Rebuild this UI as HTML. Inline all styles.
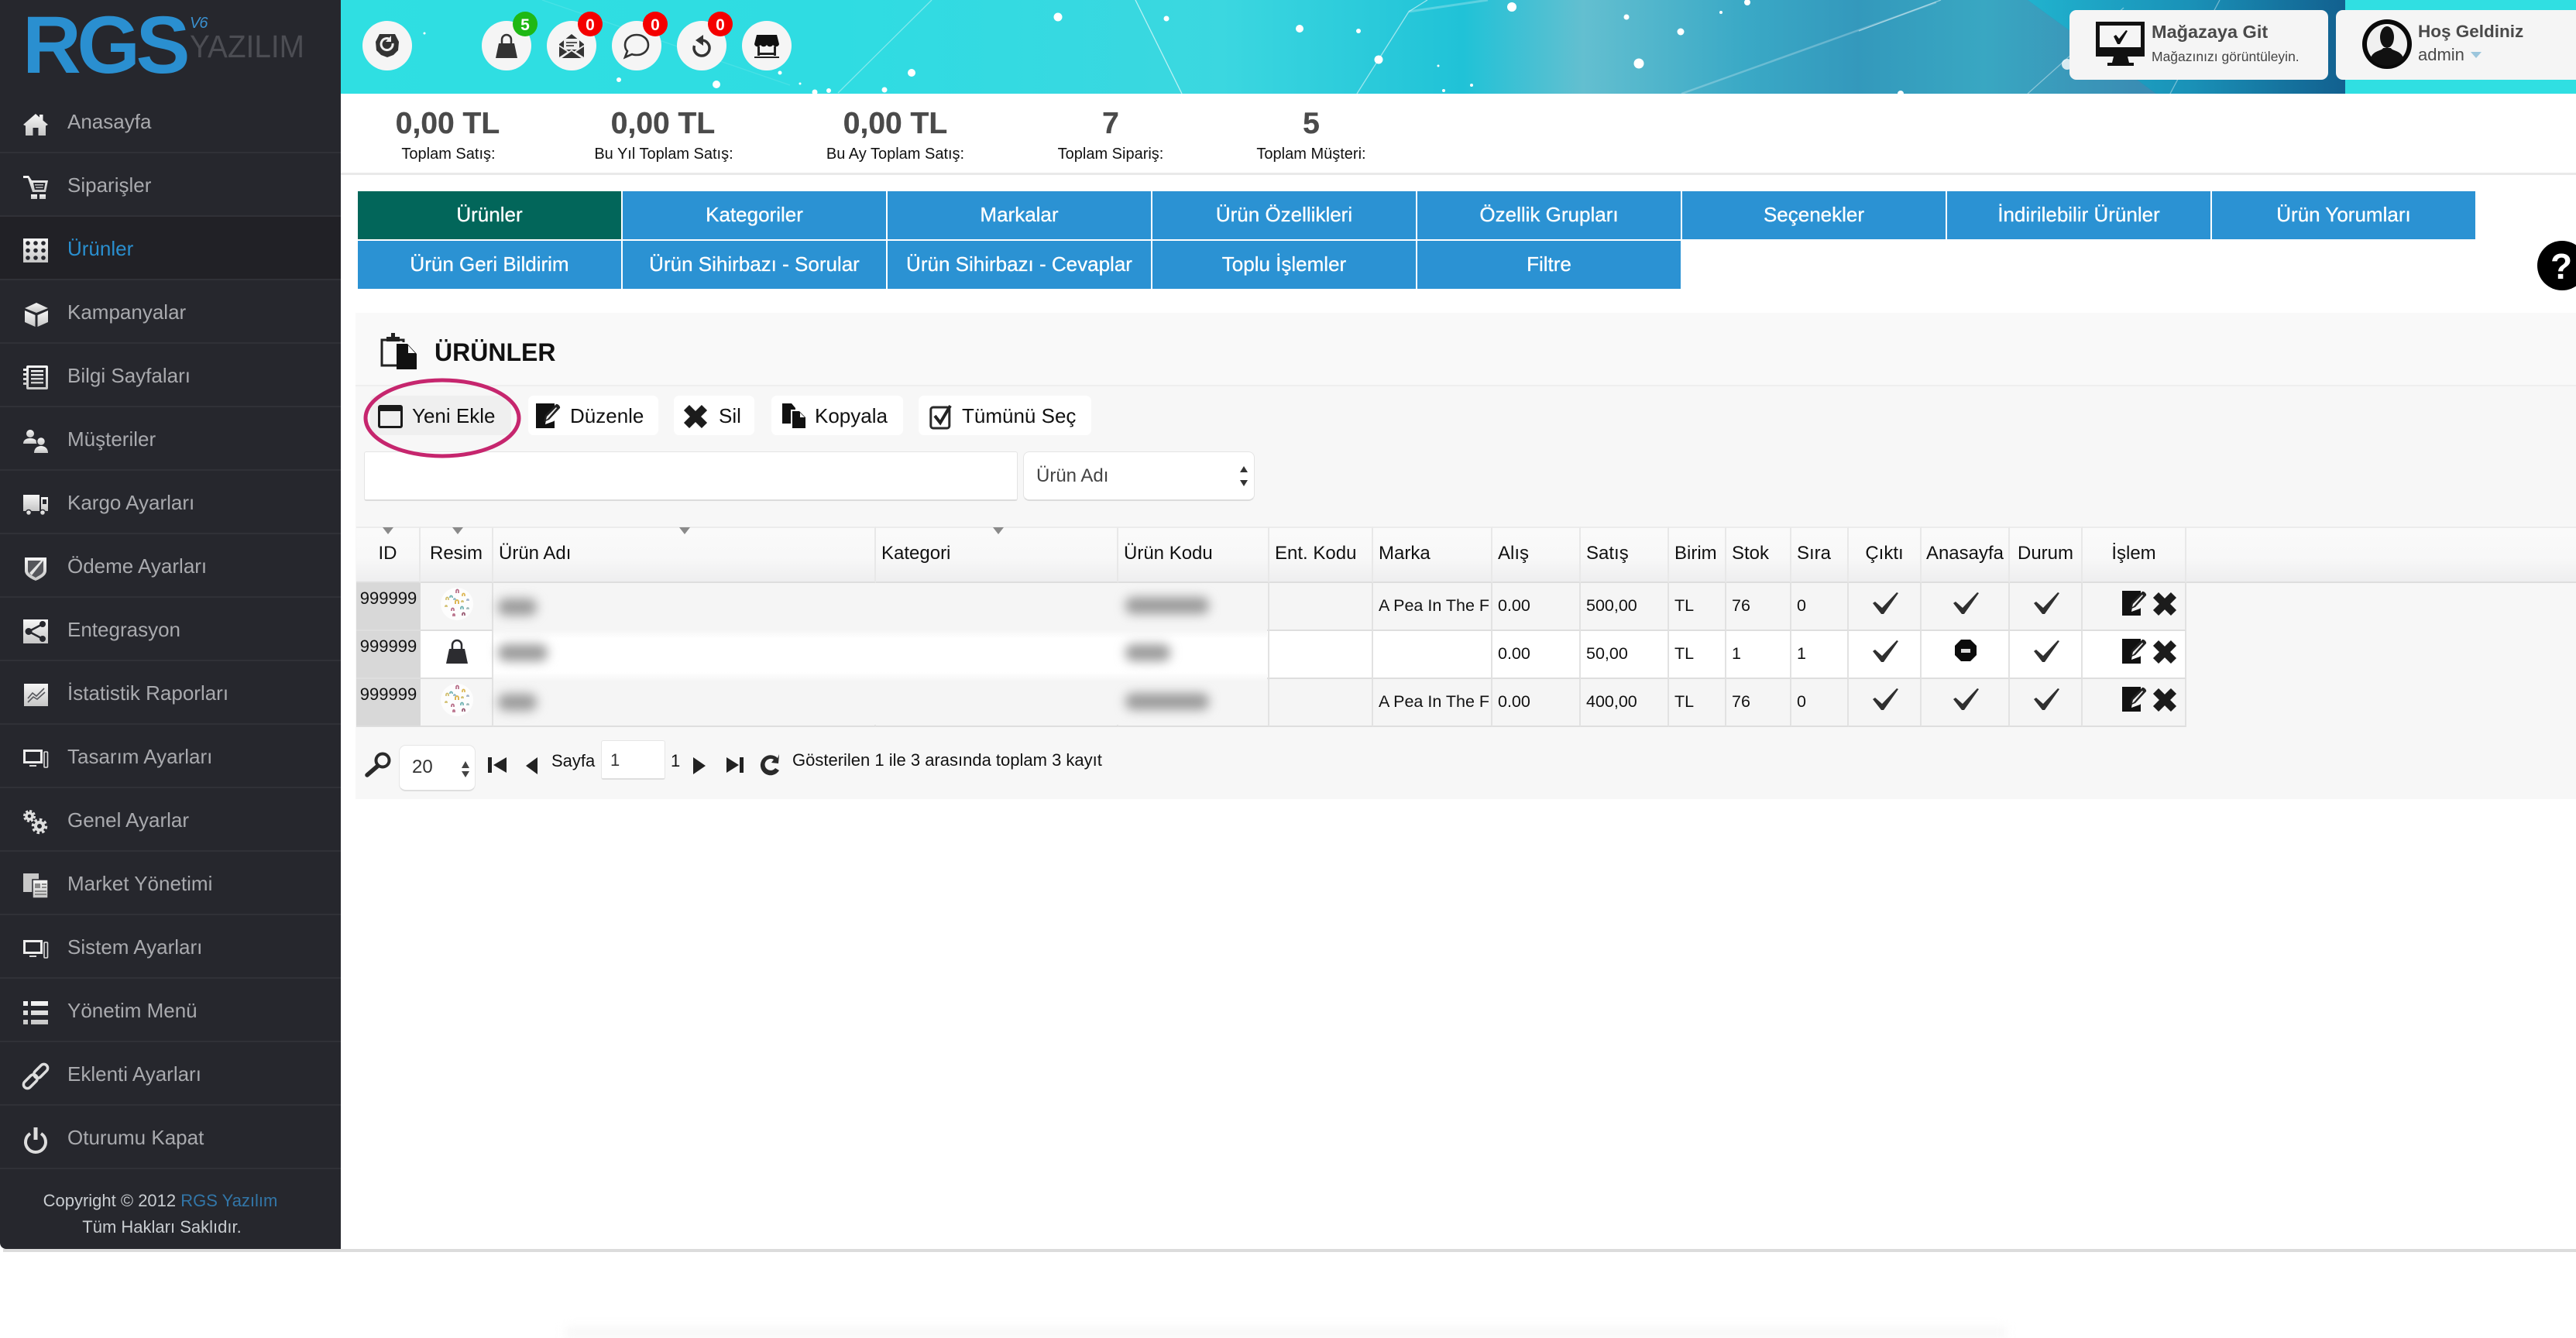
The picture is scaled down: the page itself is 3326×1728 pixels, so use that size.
<!DOCTYPE html>
<html lang="tr"><head><meta charset="utf-8"><title>RGS Yazılım</title>
<style>
html,body{margin:0;padding:0;background:#fff}
body{width:3326px;height:1725px;position:relative;overflow:hidden;font-family:"Liberation Sans",Arial,sans-serif;color:#111}
.a{position:absolute}
.t{position:absolute;white-space:nowrap;line-height:40px}
#side{left:0;top:0;width:440px;height:1613px;background:#26272d;border-bottom-left-radius:8px}
#side ul{list-style:none;margin:0;padding:0;position:absolute;top:116px;left:0;width:440px}
#side li{height:82px;box-sizing:border-box;border-bottom:2px solid #303137;line-height:83px;font-size:26px;color:#a9aaae;padding-left:87px;white-space:nowrap}
#side li.on{background:#212126;color:#2a8fcf}
.s1{width:340px;text-align:center;font-size:39px;font-weight:bold;color:#4a4a4a;-webkit-text-stroke:.3px #4a4a4a}
.s2{width:340px;text-align:center;font-size:20px;color:#111}
.tab{position:absolute;height:62px;width:340px;background:#2b92d3;color:#fff;text-align:center;line-height:60px;font-size:26px;-webkit-text-stroke:.3px #fff;white-space:nowrap}
.btn{position:absolute;top:511px;height:51px;background:#fff;border-radius:7px}
.bt{font-size:26px;top:517px}
table{position:absolute;left:460px;top:680px;border-collapse:separate;border-spacing:0;table-layout:fixed;width:2363px;font-size:21.5px}
th{height:73px;box-sizing:border-box;background:linear-gradient(#fafafa 0,#f8f8f8 55%,#eeeeef 100%);border-right:2px solid #e8e8e8;border-bottom:2px solid #dedede;border-top:2px solid #ececec;font-weight:normal;font-size:24px;text-align:left;vertical-align:top;padding:14px 0 0 7px;line-height:38px;white-space:nowrap;overflow:hidden}
th.c{text-align:center;padding-left:0}
td{height:62px;box-sizing:border-box;background:#f5f5f5;border-right:2px solid #e2e2e2;border-bottom:2px solid #dedede;padding:0 0 3px 7px;white-space:nowrap;overflow:hidden;line-height:38px;vertical-align:middle}
tr.w td{background:#fff}
table tr td.id{background:#d8d8d8;font-size:22px;padding:1px 0 0 0;vertical-align:top;text-align:center;border-right:0;line-height:38px}
.bl{position:absolute;background:#9c9c9c;border-radius:10px;filter:blur(7px);height:22px}
</style></head><body>

<svg class="a" style="left:440px;top:0" width="2886" height="121" viewBox="440 0 2886 121">
<defs>
<linearGradient id="bg" gradientUnits="userSpaceOnUse" x1="440" y1="0" x2="3028" y2="0">
<stop offset="0" stop-color="#2fdfe2"/><stop offset=".25" stop-color="#2fdce2"/><stop offset=".44" stop-color="#3bd7e0"/><stop offset=".56" stop-color="#20c2d7"/><stop offset=".62" stop-color="#63bfd0"/><stop offset=".7" stop-color="#3aa9c6"/><stop offset=".8" stop-color="#2f8cb5"/><stop offset="1" stop-color="#12608f"/>
</linearGradient>
<linearGradient id="bg2" gradientUnits="userSpaceOnUse" x1="2620" y1="0" x2="3028" y2="0">
<stop offset="0" stop-color="#20b2ce"/><stop offset=".5" stop-color="#1a92b8"/><stop offset="1" stop-color="#12608f"/>
</linearGradient>
<linearGradient id="bg3" gradientUnits="userSpaceOnUse" x1="2400" y1="0" x2="2760" y2="0">
<stop offset="0" stop-color="#3399bc"/><stop offset=".45" stop-color="#39a7c2"/><stop offset="1" stop-color="#3a8db4"/>
</linearGradient>
</defs>
<rect x="440" y="0" width="2886" height="121" fill="#30dfe2"/>
<rect x="440" y="0" width="2588" height="121" fill="url(#bg)"/>
<polygon points="2400,0 2618,0 2784,121 2400,121" fill="url(#bg3)"/>
<polygon points="2618,0 3028,0 3028,121 2784,121" fill="url(#bg2)"/>
<g stroke="#fff" fill="none" stroke-opacity=".4" stroke-width="1.300">
<path d="M1203 0 1082 120"/><path d="M1466 0 1526 121" stroke-opacity=".65"/><path d="M1843 0 1819 15 1752 121" stroke-opacity=".55"/>
<path d="M1819 15 1921 0" stroke-width="3" stroke-opacity=".25"/><path d="M2500 3 2171 121" stroke-width="2.500" stroke-opacity=".25"/>
<path d="M2400 40 2506 0" stroke-opacity=".45"/><path d="M2742 10 2618 121"/><path d="M2866 0 2802 121"/>
<path d="M700 0 1020 110" stroke-opacity=".12"/>
</g>
<g fill="#fff">
<circle cx="1366" cy="22" r="5.500"/><circle cx="1506" cy="24" r="3.500"/><circle cx="1678" cy="37" r="5"/><circle cx="1754" cy="40" r="3"/><circle cx="1780" cy="77" r="5.500"/><circle cx="1952" cy="9" r="6"/><circle cx="2100" cy="22" r="3.500"/><circle cx="2170" cy="41" r="4.500"/><circle cx="2116" cy="82" r="6.500"/><circle cx="2256" cy="3" r="4"/><circle cx="2222" cy="16" r="2"/><circle cx="1177" cy="94" r="5"/><circle cx="1142" cy="116" r="3.500"/><circle cx="1857" cy="85" r="1.500"/><circle cx="1900" cy="110" r="2"/><circle cx="1864" cy="117" r="2"/><circle cx="925" cy="109" r="5"/><circle cx="799" cy="103" r="3"/><circle cx="1007" cy="94" r="2.500"/><circle cx="1052" cy="119" r="3.500"/><circle cx="1070" cy="117" r="3"/><circle cx="548" cy="43" r="1.500"/><circle cx="1033" cy="108" r="1.500"/><circle cx="2669" cy="83" r="7" fill-opacity=".8"/><circle cx="2454" cy="121" r="4"/>
</g>
</svg>

<div id="side" class="a">
<ul>
<li>Anasayfa</li><li>Siparişler</li><li class="on">Ürünler</li><li>Kampanyalar</li><li>Bilgi Sayfaları</li><li>Müşteriler</li><li>Kargo Ayarları</li><li>Ödeme Ayarları</li><li>Entegrasyon</li><li>İstatistik Raporları</li><li>Tasarım Ayarları</li><li>Genel Ayarlar</li><li>Market Yönetimi</li><li>Sistem Ayarları</li><li>Yönetim Menü</li><li>Eklenti Ayarları</li><li>Oturumu Kapat</li>
</ul>
<div class="t" style="left:0;width:414px;text-align:center;top:1531px;font-size:22px;color:#c9cdd1">Copyright © 2012 <span style="color:#3276a8">RGS Yazılım</span></div>
<div class="t" style="left:0;width:418px;text-align:center;top:1565px;font-size:22px;color:#c9cdd1">Tüm Hakları Saklıdır.</div>
<div class="t" style="left:29px;top:9px;line-height:100px;font-size:105px;font-weight:bold;color:#2a8fd0;letter-spacing:-5.500px">RGS</div>
<div class="t" style="left:245px;top:20px;line-height:20px;font-size:20px;font-style:italic;color:#3a90cf;letter-spacing:-1px">V6</div>
<svg class="a" style="left:240px;top:40px" width="165" height="40"><text x="5" y="34" font-family="Liberation Sans" font-size="41" fill="#4c4d53" textLength="148" lengthAdjust="spacingAndGlyphs">YAZILIM</text></svg>
</div>

<div class="a" style="left:4px;top:1613px;width:3322px;height:4px;background:#dcdcdc"></div>
<div class="a" style="left:440px;top:223px;width:2886px;height:3px;background:#e9e9e9"></div>
<div class="a" style="left:730px;top:1714px;width:1860px;height:14px;background:#f7f7f7;filter:blur(6px)"></div>

<div class="t s1" style="left:408px;top:140px">0,00 TL</div><div class="t s2" style="left:409px;top:179px">Toplam Satış:</div>
<div class="t s1" style="left:686px;top:140px">0,00 TL</div><div class="t s2" style="left:687px;top:179px">Bu Yıl Toplam Satış:</div>
<div class="t s1" style="left:986px;top:140px">0,00 TL</div><div class="t s2" style="left:986px;top:179px">Bu Ay Toplam Satış:</div>
<div class="t s1" style="left:1264px;top:140px">7</div><div class="t s2" style="left:1264px;top:179px">Toplam Sipariş:</div>
<div class="t s1" style="left:1523px;top:140px">5</div><div class="t s2" style="left:1523px;top:179px">Toplam Müşteri:</div>

<div class="tab" style="left:462px;top:247px;background:#02665a">Ürünler</div>
<div class="tab" style="left:804px;top:247px">Kategoriler</div>
<div class="tab" style="left:1146px;top:247px">Markalar</div>
<div class="tab" style="left:1488px;top:247px">Ürün Özellikleri</div>
<div class="tab" style="left:1830px;top:247px">Özellik Grupları</div>
<div class="tab" style="left:2172px;top:247px">Seçenekler</div>
<div class="tab" style="left:2514px;top:247px">İndirilebilir Ürünler</div>
<div class="tab" style="left:2856px;top:247px">Ürün Yorumları</div>
<div class="tab" style="left:462px;top:311px">Ürün Geri Bildirim</div>
<div class="tab" style="left:804px;top:311px">Ürün Sihirbazı - Sorular</div>
<div class="tab" style="left:1146px;top:311px">Ürün Sihirbazı - Cevaplar</div>
<div class="tab" style="left:1488px;top:311px">Toplu İşlemler</div>
<div class="tab" style="left:1830px;top:311px">Filtre</div>

<div class="a" style="left:459px;top:404px;width:2867px;height:95px;background:#f9f9f9;border-bottom:2px solid #efefef;box-sizing:border-box"></div>
<div class="a" style="left:459px;top:499px;width:2867px;height:533px;background:#f7f7f7"></div>
<div class="t" style="left:561px;top:435px;font-size:32px;font-weight:bold;color:#111">ÜRÜNLER</div>

<div class="btn" style="left:478px;width:182px;background:#efefef"></div>
<div class="btn" style="left:682px;width:168px"></div>
<div class="btn" style="left:870px;width:104px"></div>
<div class="btn" style="left:996px;width:170px"></div>
<div class="btn" style="left:1186px;width:223px"></div>
<div class="t bt" style="left:532px">Yeni Ekle</div>
<div class="t bt" style="left:736px">Düzenle</div>
<div class="t bt" style="left:928px">Sil</div>
<div class="t bt" style="left:1052px">Kopyala</div>
<div class="t bt" style="left:1242px">Tümünü Seç</div>

<div class="a" style="left:470px;top:583px;width:844px;height:64px;background:#fff;border:1px solid #e4e4e4;border-bottom:2px solid #dcdcdc;box-sizing:border-box;border-radius:3px"></div>
<div class="a" style="left:1321px;top:583px;width:299px;height:64px;background:#fff;border:1px solid #e4e4e4;border-bottom:2px solid #dcdcdc;box-sizing:border-box;border-radius:8px"></div>
<div class="t" style="left:1338px;top:595px;font-size:24px;color:#444">Ürün Adı</div>

<div class="a" style="left:2820px;top:680px;width:506px;height:73px;box-sizing:border-box;background:linear-gradient(#fafafa 0,#f8f8f8 55%,#eeeeef 100%);border-bottom:2px solid #dedede;border-top:2px solid #ececec"></div>

<table>
<colgroup><col style="width:83px"><col style="width:94px"><col style="width:494px"><col style="width:313px"><col style="width:195px"><col style="width:134px"><col style="width:154px"><col style="width:114px"><col style="width:114px"><col style="width:74px"><col style="width:84px"><col style="width:74px"><col style="width:94px"><col style="width:114px"><col style="width:94px"><col style="width:134px"></colgroup>
<tr><th class="c">ID</th><th class="c">Resim</th><th>Ürün Adı</th><th>Kategori</th><th>Ürün Kodu</th><th>Ent. Kodu</th><th>Marka</th><th>Alış</th><th>Satış</th><th>Birim</th><th>Stok</th><th>Sıra</th><th class="c">Çıktı</th><th class="c">Anasayfa</th><th class="c">Durum</th><th class="c">İşlem</th></tr>
<tr><td class="id">999999</td><td></td><td></td><td></td><td></td><td></td><td>A Pea In The F</td><td>0.00</td><td>500,00</td><td>TL</td><td>76</td><td>0</td><td></td><td></td><td></td><td></td></tr>
<tr class="w"><td class="id">999999</td><td></td><td></td><td></td><td></td><td></td><td></td><td>0.00</td><td>50,00</td><td>TL</td><td>1</td><td>1</td><td></td><td></td><td></td><td></td></tr>
<tr><td class="id">999999</td><td></td><td></td><td></td><td></td><td></td><td>A Pea In The F</td><td>0.00</td><td>400,00</td><td>TL</td><td>76</td><td>0</td><td></td><td></td><td></td><td></td></tr>
</table>

<div class="a" style="left:637px;top:753px;width:999px;height:183px;background:linear-gradient(#f5f5f5 0,#f5f5f5 60px,#fff 72px,#fff 115px,#f5f5f5 127px,#f5f5f5 100%)"></div>
<div class="bl" style="left:643px;top:773px;width:50px"></div>
<div class="bl" style="left:643px;top:832px;width:64px"></div>
<div class="bl" style="left:643px;top:896px;width:50px"></div>
<div class="bl" style="left:1453px;top:771px;width:108px"></div>
<div class="bl" style="left:1453px;top:832px;width:58px"></div>
<div class="bl" style="left:1453px;top:895px;width:108px"></div>

<div class="a" style="left:515px;top:962px;width:99px;height:60px;background:#fff;border:1px solid #e6e6e6;border-bottom:2px solid #dedede;box-sizing:border-box;border-radius:9px"></div>
<div class="a" style="left:776px;top:956px;width:83px;height:51px;background:#fff;border:1px solid #e6e6e6;border-bottom:2px solid #dedede;box-sizing:border-box;border-radius:3px"></div>
<div class="t" style="left:532px;top:971px;font-size:24px;color:#333">20</div>
<div class="t" style="left:712px;top:963px;font-size:22px">Sayfa</div>
<div class="t" style="left:788px;top:962px;font-size:22px;color:#333">1</div>
<div class="t" style="left:866px;top:963px;font-size:22px">1</div>
<div class="t" style="left:1023px;top:962px;font-size:22px">Gösterilen 1 ile 3 arasında toplam 3 kayıt</div>

<!-- top right cards -->
<div class="a" style="left:2672px;top:13px;width:334px;height:90px;background:#f5f5f5;border-radius:9px"></div>
<div class="a" style="left:3016px;top:13px;width:330px;height:90px;background:#f5f5f5;border-radius:9px"></div>
<div class="t" style="left:2778px;top:21px;font-size:23.500px;font-weight:bold;color:#4a4a4a">Mağazaya Git</div>
<div class="t" style="left:2778px;top:53px;font-size:17.500px;color:#444">Mağazınızı görüntüleyin.</div>
<div class="t" style="left:3122px;top:21px;font-size:22.500px;font-weight:bold;color:#4a4a4a">Hoş Geldiniz</div>
<div class="t" style="left:3122px;top:51px;font-size:22px;color:#4a4a4a">admin</div>

<svg class="a" style="left:0;top:0" width="3326" height="1725" viewBox="0 0 3326 1725">
<defs>
<linearGradient id="ig" x1="0" y1="0" x2="0" y2="1"><stop offset="0" stop-color="#f6f6f6"/><stop offset="1" stop-color="#c6c6c6"/></linearGradient>
<g id="mon"><rect x="1.500" y="5.500" width="22" height="15" fill="none" stroke="#ececec" stroke-width="3"/><rect x="8" y="24" width="9" height="2" fill="#d8d8d8"/><rect x="27" y="7" width="4.500" height="20" rx="1" fill="none" stroke="#ddd" stroke-width="1.600"/></g>
<g id="bag"><path d="M6 13h20l4 19H2z"/><path d="M10 15V8a6 6 0 0 1 12 0v7" fill="none" stroke="currentColor" stroke-width="2.500"/></g>
<path id="chk" d="M0 14 3 12 12 20 31 0 33 1 14 28 11 28z"/>
<g id="edit"><path d="M0 0h24v6L14 16l-2 11 11-4 1-1v10H0z" fill="#111"/><path d="M10 24l2-9L26 1c2-1 6 3 5 5L17 21z" fill="#222"/><path d="M13 21l1-4L26 5l1 1L15 20z" fill="#eee"/></g>
<path id="xx" d="M3.500 3.500 26.500 26.500M26.500 3.500 3.500 26.500" stroke="#1c1c1c" stroke-width="10" fill="none"/>
<g id="dots" opacity=".8"><circle cx="0" cy="0" r="21" fill="#fff"/><g fill="none" stroke-width="1.700">
<path d="M-2 0v-3a2 2 0 0 1 4 0v3" stroke="#d8a82e" stroke-width="2"/><path d="M-14 -5v-2a1.500 1.500 0 0 1 3 0v2" stroke="#c9b24e"/><path d="M-1 -14v-3a1.500 1.500 0 0 1 3 0v3" stroke="#a84a6c"/><path d="M7 -10v-2a1.500 1.500 0 0 1 3 0v2" stroke="#d8a82e"/><path d="M-9 -8v-1a1.500 1.500 0 0 1 3 0v1" stroke="#4aa0a0"/><path d="M13 -4v-1a1 1 0 0 1 2 0v1" stroke="#8aa0c0"/><path d="M-7 9v-2a1.500 1.500 0 0 1 3 0v2" stroke="#a84a6c"/><path d="M5 7v-2a1.500 1.500 0 0 1 3 0v2" stroke="#4aa0a0"/><path d="M-5 16v-2a1 1 0 0 1 2 0v2" stroke="#a84a6c"/><path d="M7 15v-2a1.500 1.500 0 0 1 3 0v2" stroke="#803050"/><path d="M-15 4v-1a1 1 0 0 1 2 0v1" stroke="#c9b24e"/><path d="M13 7v-1a1 1 0 0 1 2 0v1" stroke="#8aa"/><path d="M-4 -5v-1a1 1 0 0 1 2 0v1" stroke="#7ab"/><path d="M6 -2v-1a1 1 0 0 1 2 0v1" stroke="#c9b24e"/></g></g>
</defs>

<!-- sidebar icons -->
<g fill="url(#ig)">
<g transform="translate(30,144)"><path d="M16 3 21 7.500V4h4.500v7.500L32 17l-3 1.500V31H19.500V21h-7v10H3V18.500L0 17z"/></g>
<g transform="translate(30,226)"><path d="M0 1h7l4 6h21l-3 15H12L6 4H0z"/><path fill="#26272d" d="M13 10h15.500l-1.700 9H14.800z"/><path d="M15 12h11v1.500H15zM16 15.500h9.500V17H16z" fill="#bbb"/><rect x="10" y="25" width="8" height="6"/><rect x="21" y="25" width="8" height="6"/></g>
<g transform="translate(30,308)"><rect x="0" y="0" width="32" height="31"/><g fill="#26272d"><circle cx="6" cy="6" r="2.800"/><circle cx="16" cy="6" r="2.800"/><circle cx="26" cy="6" r="2.800"/><circle cx="6" cy="15.500" r="2.800"/><circle cx="16" cy="15.500" r="2.800"/><circle cx="26" cy="15.500" r="2.800"/><circle cx="6" cy="25" r="2.800"/><circle cx="16" cy="25" r="2.800"/><circle cx="26" cy="25" r="2.800"/></g></g>
<g transform="translate(30,390)"><path d="M17 1 32 8 17 14 2 8z"/><path d="M2 11 15.500 17V32L2 26z"/><path d="M32 11 18.500 17V32L32 26z"/></g>
<g transform="translate(30,472)"><rect x="4" y="0" width="28" height="31" rx="2"/><rect x="7" y="3" width="22" height="25" fill="#26272d"/><path d="M10 6h16v2.500H10zM10 11h16v2.500H10zM10 16h16v2.500H10zM10 21h16v2.500H10z"/><path d="M0 4h5v3H0zM0 10h5v3H0zM0 16h5v3H0zM0 22h5v3H0z"/></g>
<g transform="translate(30,554)"><circle cx="9" cy="6" r="5"/><path d="M0 19c0-5 4-7 9-7s9 2 9 7z"/><circle cx="23" cy="16" r="5.500" stroke="#26272d" stroke-width="1.500"/><path d="M14 31c0-6 4-9 9-9s9 3 9 9z"/></g>
<g transform="translate(30,636)"><path d="M0 3h21v21H0z"/><path d="M23 6h9v18h-9z"/><path d="M25 9h5v6h-5z" fill="#26272d"/><circle cx="7" cy="26" r="3.500" stroke="#26272d" stroke-width="1.500"/><circle cx="25" cy="26" r="3.500" stroke="#26272d" stroke-width="1.500"/></g>
<g transform="translate(30,718)"><path d="M2 2h28v17c0 6-7 10-14 13C9 29 2 25 2 19z"/><path d="M6 6h20v13c0 4-5 6-10 9-5-3-10-5-10-9z" fill="#55565b"/><path d="M8 22 23 6h3L11 25z" fill="#e4e4e4"/></g>
<g transform="translate(30,800)"><rect x="0" y="0" width="32" height="31"/><path d="M7 15.500 25 6M7 15.500 25 25" stroke="#26272d" stroke-width="2.500" fill="none"/><g fill="#26272d"><circle cx="7" cy="15.500" r="4.500"/><circle cx="25" cy="6" r="4"/><circle cx="25" cy="25" r="4"/></g></g>
<g transform="translate(31,882)"><rect x="0" y="1" width="31" height="29"/><path d="M5 20 11 13 16 17 26 7M5 25 12 18 17 21 27 12" stroke="#55565b" stroke-width="1.600" fill="none"/></g>
<g transform="translate(30,1128)"><rect x="0" y="0" width="20" height="24" fill="#c8c8c8"/><rect x="12" y="8" width="20" height="24" stroke="#26272d" stroke-width="1.500"/><path d="M15 13h7v6h-7zM24 13h6v2h-6zM24 17h6v2h-6zM15 22h15v2H15zM15 26h15v2H15z" fill="#8a8a8a"/></g>
<g transform="translate(30,1292)"><path d="M0 1h6v6H0zM0 13h6v6H0zM0 25h6v6H0zM10 1h22v6H10zM10 13h22v6H10zM10 25h22v6H10z"/></g>
</g>
<use href="#mon" transform="translate(30,964)"/>
<use href="#mon" transform="translate(30,1210)"/>
<g transform="translate(30,1046)" fill="none" stroke="#ddd"><circle cx="8" cy="8" r="4" stroke-width="3.500"/><circle cx="8" cy="8" r="6.500" stroke-width="3" stroke-dasharray="3 2.100"/><circle cx="21" cy="21" r="5" stroke-width="4"/><circle cx="21" cy="21" r="8.500" stroke-width="3.500" stroke-dasharray="3.500 3.100"/></g>
<g transform="translate(30,1374) rotate(-45 16 16)" fill="none" stroke="#ddd" stroke-width="3.500"><rect x="-4" y="11" width="21" height="10" rx="5"/><rect x="15" y="11" width="21" height="10" rx="5"/></g>
<g transform="translate(30,1456)" fill="none" stroke="#ddd"><path d="M9 8a13 13 0 1 0 14 0" stroke-width="4"/><path d="M16 0v16" stroke-width="5"/></g>

<!-- top circles -->
<g fill="#f5f5f5"><circle cx="500" cy="59" r="32"/><circle cx="654" cy="59" r="32"/><circle cx="738" cy="59" r="32"/><circle cx="822" cy="59" r="32"/><circle cx="906" cy="59" r="32"/><circle cx="990" cy="59" r="32"/></g>
<path d="M490 44h20l5 10-1 11-6 6-8 3-8-3-6-6-1-11z" fill="#333"/><path d="M507 56a7.500 7.500 0 1 1-3-5" fill="none" stroke="#eee" stroke-width="3"/><path d="M505 46v8h-7z" fill="#eee"/>
<g color="#333" fill="#333"><use href="#bag" transform="translate(638,43)"/></g>
<path d="M722 57 738 44 754 57V75H722z" fill="#333"/><path d="M728 50h20v14h-20z" fill="#eee"/><path d="M731 54h14v2h-14zM731 58h10v2h-10z" fill="#555"/><path d="M722 59 734 67 722 75M754 59 742 67 754 75M724 75 738 65 752 75" stroke="#eee" stroke-width="1.800" fill="none"/>
<path d="M822 45c9 0 15 6 15 13s-6 13-15 13c-2 0-4 0-6-1l-9 4 3-8c-2-2-3-5-3-8 0-7 6-13 15-13z" fill="none" stroke="#333" stroke-width="2.600"/>
<path d="M906 52a10 10 0 1 1-9.500 7" fill="none" stroke="#333" stroke-width="3.500"/><path d="M908 45v14l-10-7z" fill="#333"/>
<path d="M977 45h26l3 12c-1 4-6 4-8 1-2 3-6 3-8 0-2 3-6 3-8 0-2 3-7 3-8-1z" fill="#111"/><path d="M978 60h3v12h-3zM999 60h3v12h-3zM978 68h24v3h-24zM974 73h32v2h-32z" fill="#222"/>
<circle cx="678" cy="31" r="16" fill="#1fb815"/><circle cx="762" cy="31" r="16" fill="#f40000"/><circle cx="846" cy="31" r="16" fill="#f40000"/><circle cx="930" cy="31" r="16" fill="#f40000"/>
<g font-family="Liberation Sans" font-size="21" font-weight="bold" fill="#fff" text-anchor="middle"><text x="678" y="39">5</text><text x="762" y="39">0</text><text x="846" y="39">0</text><text x="930" y="39">0</text></g>

<!-- monitor -->
<rect x="2706" y="28" width="63" height="45" fill="#111"/><rect x="2711" y="33" width="53" height="28" fill="#f5f5f5"/><path d="M2729 73h18l2 8h6v4h-34v-4h6z" fill="#111"/><path d="M2729 47l3-2 4 5 9-11 2 1-10 17h-3z" fill="#111"/>
<!-- avatar -->
<circle cx="3082" cy="57" r="32" fill="#0a0a0a"/><circle cx="3082" cy="57" r="26" fill="#f0f0f0"/><ellipse cx="3082" cy="48" rx="9" ry="14" fill="#111"/><path d="M3061 75c3-10 14-9 16-13h10c2 4 13 3 16 13a27 27 0 0 1-42 0z" fill="#111"/>
<path d="M3190 67h14l-7 8z" fill="#9cc6dc"/>

<!-- help -->
<circle cx="3308" cy="343" r="32" fill="#000"/><text x="3307" y="360" font-family="Liberation Sans" font-size="46" font-weight="bold" fill="#fff" text-anchor="middle">?</text>

<!-- title icon -->
<g transform="translate(490,430)"><path d="M22 42H3V9h8M25 9h6v3" fill="none" stroke="#222" stroke-width="3"/><path d="M15 0h5v5h6v6H9V5h6z" fill="#222"/><path d="M22 14h14l12 13v20H22z" fill="#111"/><path d="M37 16v10h9z" fill="#f9f9f9"/></g>

<!-- magenta ring -->
<ellipse cx="571" cy="540" rx="99" ry="49" fill="none" stroke="#c6266e" stroke-width="5"/>

<!-- toolbar icons -->
<g transform="translate(488,523)"><rect x="1.500" y="1.500" width="29" height="27" rx="1.500" fill="none" stroke="#1a1a1a" stroke-width="3"/><rect x="1" y="1" width="30" height="7" fill="#1a1a1a"/></g>
<use href="#edit" transform="translate(692,521)"/>
<use href="#xx" transform="translate(883,523)"/>
<g transform="translate(1010,521)"><path d="M0 0h12l5 6v2h-6v18H0z" fill="#111"/><path d="M13 10h9l8 8v14H13z" fill="#111"/><path d="M23 12v6h6z" fill="#f5f5f5"/></g>
<g transform="translate(1200,522)"><rect x="1.800" y="4" width="24" height="27" rx="3" fill="none" stroke="#2a2a2a" stroke-width="3"/><path d="M7 15l7 9L27 2" fill="none" stroke="#222" stroke-width="4"/></g>

<!-- select arrows -->
<path d="M1601 610l5-8 5 8zM1601 620l5 8 5-8z" fill="#333"/>

<!-- sort arrows -->
<g fill="#8a8a8a"><path d="M494 681h14l-7 9z"/><path d="M584 681h14l-7 9z"/><path d="M877 681h14l-7 9z"/><path d="M1282 681h14l-7 9z"/></g>

<!-- thumbs -->
<use href="#dots" transform="translate(590,780)"/>
<use href="#dots" transform="translate(590,904)"/>
<g color="#2c2c30" fill="#2c2c30"><use href="#bag" transform="translate(574,825)"/></g>

<!-- checks -->
<g fill="#2f2f2f">
<use href="#chk" transform="translate(2418,765)"/><use href="#chk" transform="translate(2522,765)"/><use href="#chk" transform="translate(2626,765)"/>
<use href="#chk" transform="translate(2418,827)"/><use href="#chk" transform="translate(2626,827)"/>
<use href="#chk" transform="translate(2418,889)"/><use href="#chk" transform="translate(2522,889)"/><use href="#chk" transform="translate(2626,889)"/>
</g>
<path d="M2532 826h12l8 8v12l-8 8h-12l-8-8v-12z" fill="#0c0c0c"/><rect x="2532" y="838" width="12" height="5" fill="#ddd"/>

<use href="#edit" transform="translate(2740,763)"/><use href="#xx" transform="translate(2780,765)"/>
<use href="#edit" transform="translate(2740,825)"/><use href="#xx" transform="translate(2780,827)"/>
<use href="#edit" transform="translate(2740,887)"/><use href="#xx" transform="translate(2780,889)"/>

<!-- pager icons -->
<circle cx="494" cy="982" r="8.500" fill="none" stroke="#2a2a2a" stroke-width="4"/><path d="M488 989 474 1001" stroke="#2a2a2a" stroke-width="5.500" stroke-linecap="round"/>
<path d="M596 992l5-9 5 9zM596 996l5 8 5-8z" fill="#444"/>
<path d="M630 978h5v20h-5zM654 978v20l-17-10z" fill="#222"/>
<path d="M694 978v22l-15-11z" fill="#222"/>
<path d="M895 978v22l16-11z" fill="#222"/>
<path d="M938 978v20l16-10zM955 978h5v20h-5z" fill="#222"/>
<path d="M1004 979a13 13 0 1 0 2 16l-5-3a7.500 7.500 0 1 1-2-11l-3 4 9 1 1-12z" fill="#2a2a2a"/>
</svg>
</body></html>
